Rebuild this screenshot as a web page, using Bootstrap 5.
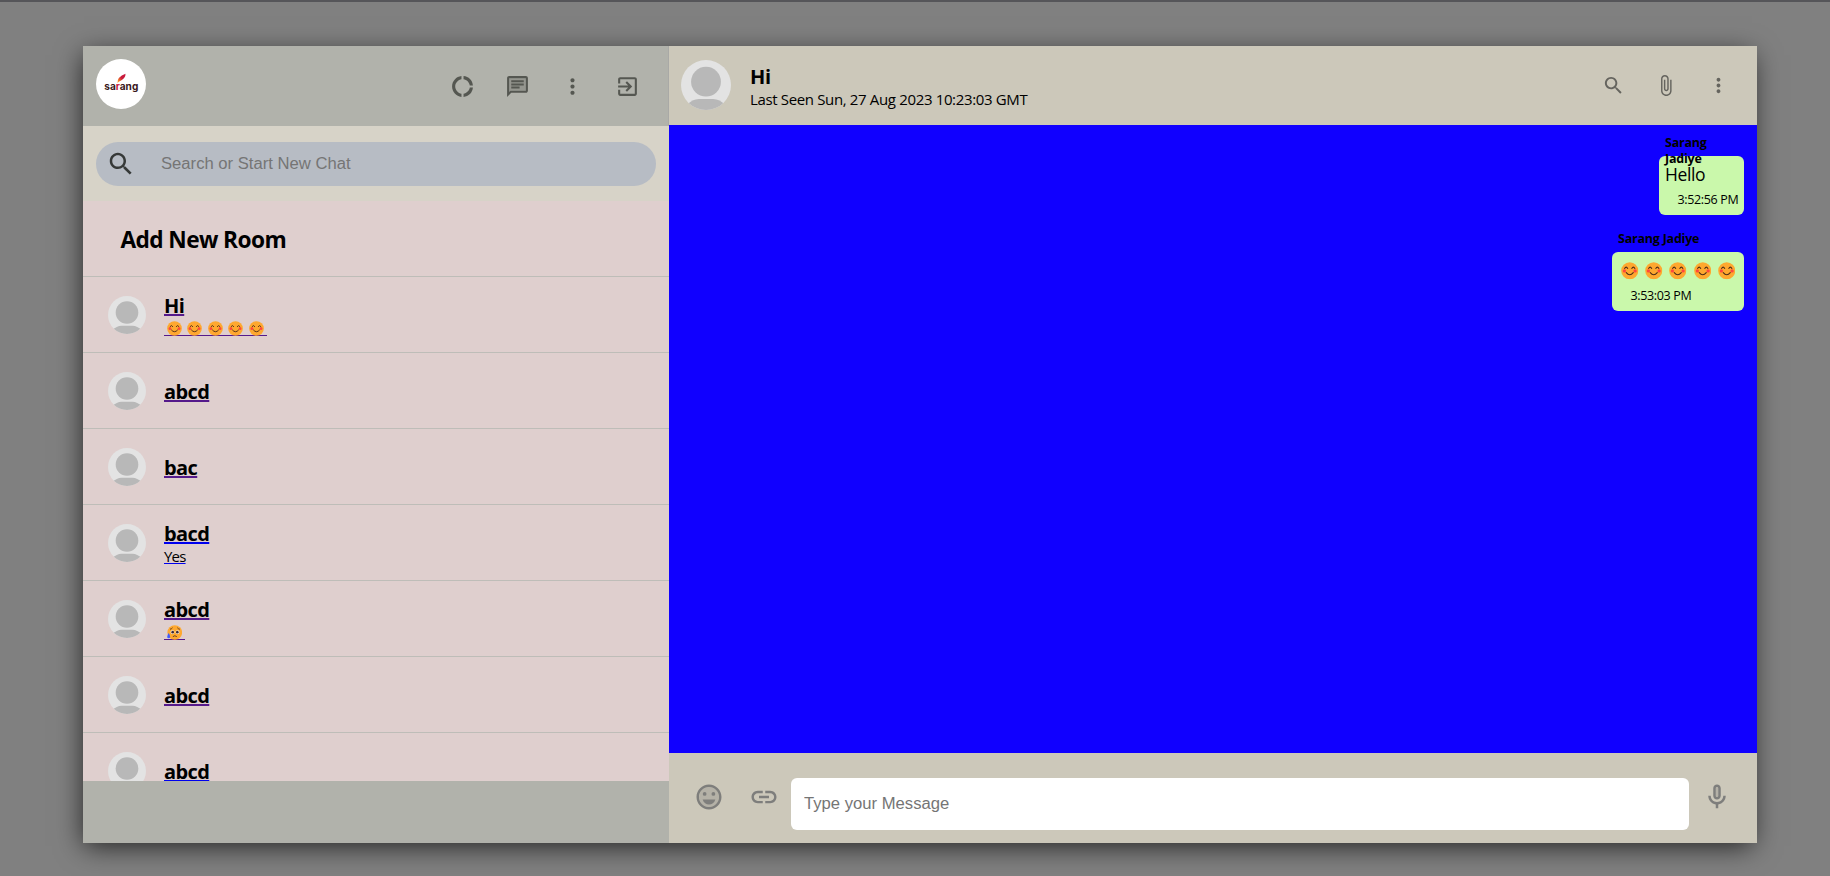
<!DOCTYPE html>
<html lang="en">
<head>
<meta charset="utf-8">
<title>Chat</title>
<link href="https://cdn.jsdelivr.net/npm/bootstrap@5.3.0/dist/css/bootstrap.min.css" rel="stylesheet">
<style>
body{background:#808080;border-top:2px solid #555559;height:100vh;overflow:hidden;font-family:"Open Sans","Noto Sans",sans-serif;color:#000}
.app{margin:44px 73px 0 83px;height:797px;box-shadow:-2px 6px 26px -3px rgba(0,0,0,.75)}
.side{width:586px}
.side-head{height:80px;flex:none;background:#b1b2ab;border-right:1px solid #a9a9a6;padding:0 28px 0 13px}
.ico{fill:#555751;display:block;flex:none}
.logo{width:50px;height:50px;margin-top:-4px}
.finder{height:75px;flex:none;background:#d7d3c8;padding:16px 13px 0}
.pill{height:44px;background:#b7bcc4;padding-left:10px}
.pill input,.composer input{font-family:"Liberation Sans",Arial,sans-serif;font-size:16.65px;outline:0}
.pill input{margin-left:25px}
input::placeholder{color:#757575;opacity:1}
.rooms{background:#dfcfce;overflow:hidden;min-height:0;flex:1 1 0}
.room{height:76px;border-bottom:1px solid #bebdb8;padding-left:25px;gap:18px;flex:none;text-decoration-color:#551a8b}
.room.fresh{text-decoration-color:#00e}
.new-room{font-size:22.7px;letter-spacing:-.6px;padding:3px 0 0 37.5px}
.room-name{font-size:20px;line-height:27px;letter-spacing:-.6px;padding-top:1px;margin-bottom:-1px;text-decoration:underline 2px;text-decoration-color:inherit;text-underline-offset:1px;text-decoration-skip-ink:none}
.room-last{font-size:15px;line-height:20px;letter-spacing:-.8px;text-decoration:underline 1px;text-decoration-color:inherit;text-underline-offset:1px;text-decoration-skip-ink:none}
.moods{height:20px;width:max-content;padding:0 3px 0 2.7px;gap:5.6px;background:linear-gradient(#551a8b,#551a8b) 0 17px/100% 1px no-repeat}
.side-foot{height:62px;flex:none;background:#b1b2ab}
.chat-head{height:79px;flex:none;background:#ccc8ba;padding:0 27px 0 12px}
.chat-head>svg{margin-top:-1px}
.chat-title{font-size:20px;line-height:27px;letter-spacing:-.4px;padding-top:1px;margin-bottom:-1px}
.chat-seen{font-size:15px;line-height:20px;letter-spacing:-.35px}
.tools{gap:29.5px}
.tools .ico{fill:#65645e}
.thread{background:#1000ff;padding:31px 13px 0;gap:37px}
.bubble{height:59px;background:#caf8ab;border-radius:6px;padding:6px 5px 0 6px}
.author{left:6px;right:6px;top:-21px;font-size:12.5px;line-height:16px;letter-spacing:-.22px}
.msg{font-size:17.5px;line-height:24px;letter-spacing:-.4px;height:26px}
.stamp{font-size:12.5px;line-height:22px;letter-spacing:-.35px;padding:1px 0 0 12.5px}
.b1{width:85px}.b2{width:132px}
.smiles{gap:6.7px;padding-left:3px}
.composer{height:90px;flex:none;background:#ccc8ba;padding:25px 25.5px 0 24.5px}
.composer .ico{fill:#7e7e7c;margin-top:4px}
.composer input{height:52px;border-radius:6px;padding:0 13px}
</style>
</head>
<body>
<svg width="0" height="0" class="position-absolute">
<defs>
<clipPath id="round"><circle cx="25" cy="25" r="25"/></clipPath>
<linearGradient id="quill" x1="1" y1="0" x2="0" y2="1"><stop offset=".45" stop-color="#c8193c"/><stop offset=".9" stop-color="#ff9a1f"/></linearGradient>
<symbol id="face" viewBox="0 0 50 50"><g clip-path="url(#round)"><rect width="50" height="50" fill="#e3e3e3"/><circle cx="25" cy="21.7" r="14.900" fill="#b8b8b8"/><path d="M6 45Q11 39 18 39h14q7 0 12 6v8H6z" fill="#b8b8b8"/></g></symbol>
<symbol id="smile" viewBox="0 0 18 18"><circle cx="9" cy="9" r="8.800" fill="#fea82f"/><circle cx="3.500" cy="9.200" r="1.700" fill="#ff473e"/><circle cx="14.500" cy="9.200" r="1.700" fill="#ff473e"/><path d="M3.700 6.600Q5.300 4 6.900 6.600M11.100 6.600Q12.700 4 14.300 6.600M5.400 10.900Q9 15.200 12.600 10.900" fill="none" stroke="#4a2a18" stroke-width="1.100" stroke-linecap="round"/></symbol>
<symbol id="worry" viewBox="0 0 18 18"><circle cx="9.300" cy="9" r="8.800" fill="#fea82f"/><circle cx="6.600" cy="8.500" r="2.300" fill="#fff"/><circle cx="12.600" cy="8.500" r="2.300" fill="#fff"/><circle cx="6.800" cy="8.600" r="1.600" fill="#402a32"/><circle cx="12.400" cy="8.600" r="1.600" fill="#402a32"/><path d="M3.600 5.100Q5.500 4.800 6.600 3.300M15.400 5.100Q13.500 4.800 12.400 3.300M7 14q2.400-2.200 4.800 0" fill="none" stroke="#59331d" stroke-width="1.100"/><path d="M2 9.500q2.200 3 1.800 5.200a1.900 1.900 0 0 1-3.600 0Q0 12.500 2 9.500z" fill="#3f5bff"/></symbol>
<symbol id="search" viewBox="0 0 24 24"><path d="M15.500 14h-.79l-.28-.27C15.410 12.590 16 11.110 16 9.500 16 5.910 13.090 3 9.500 3S3 5.910 3 9.500 5.910 16 9.500 16c1.610 0 3.090-.59 4.230-1.570l.27.28v.79l5 4.990L20.490 19l-4.990-5zm-6 0C7.010 14 5 11.990 5 9.500S7.010 5 9.500 5 14 7.010 14 9.500 11.990 14 9.500 14z"/></symbol>
<symbol id="more" viewBox="0 0 24 24"><path d="M12 8c1.100 0 2-.9 2-2s-.9-2-2-2-2 .9-2 2 .9 2 2 2zm0 2c-1.100 0-2 .9-2 2s.9 2 2 2 2-.9 2-2-.9-2-2-2zm0 6c-1.100 0-2 .9-2 2s.9 2 2 2 2-.9 2-2-.9-2-2-2z"/></symbol>
</defs>
</svg>
<main class="app d-flex">
<aside class="side d-flex flex-column flex-shrink-0">
<header class="side-head d-flex align-items-center justify-content-between">
<svg class="logo" viewBox="0 0 50 50"><circle cx="25" cy="25" r="25" fill="#fff"/><path d="M21.500 24Q21 18 29.500 14.800 30 19.500 22.800 22.800z" fill="url(#quill)"/><text x="8.300" y="31" font-family="Inter,sans-serif" font-weight="700" font-size="10" textLength="34" lengthAdjust="spacingAndGlyphs" fill="#3a1820">sa<tspan fill="#c8193c">r</tspan>ang</text></svg>
<div class="d-flex" style="gap:30px">
<svg class="ico" width="25" height="25" viewBox="0 0 24 24"><path d="M11 5.080V2c-5 .5-9 4.810-9 10s4 9.500 9 10v-3.080c-3-.48-6-3.400-6-6.920s3-6.440 6-6.920zM18.970 11H22c-.47-5-4-8.530-9-9v3.080C16 5.510 18.540 8 18.970 11zM13 18.920V22c5-.47 8.530-4 9-9h-3.030c-.43 3-2.970 5.490-5.970 5.920z"/></svg>
<svg class="ico" width="25" height="25" viewBox="0 0 24 24"><path opacity=".3" d="M4 17.170L5.170 16H20V4H4z"/><path d="M20 2H4c-1.100 0-2 .9-2 2v18l4-4h14c1.100 0 2-.9 2-2V4c0-1.100-.9-2-2-2zm0 14H5.170L4 17.170V4h16v12zM6 12h8v2H6zm0-3h12v2H6zm0-3h12v2H6z"/></svg>
<svg class="ico" width="25" height="25"><use href="#more"/></svg>
<svg class="ico" width="25" height="25" viewBox="0 0 24 24"><path d="M10.090 15.590L11.500 17l5-5-5-5-1.410 1.410L12.670 11H3v2h9.670l-2.580 2.590zM19 3H5c-1.110 0-2 .9-2 2v4h2V5h14v14H5v-4H3v4c0 1.100.89 2 2 2h14c1.100 0 2-.9 2-2V5c0-1.100-.9-2-2-2z"/></svg>
</div>
</header>
<div class="finder"><div class="pill rounded-pill d-flex align-items-center"><svg class="ico" style="fill:#363938" width="30" height="30"><use href="#search"/></svg><input class="border-0 bg-transparent flex-grow-1 p-0" placeholder="Search or Start New Chat"></div></div>
<nav class="rooms d-flex flex-column">
<div class="room new-room d-flex align-items-center fw-bold">Add New Room</div>
<div class="room d-flex align-items-center"><svg width="38" height="38"><use href="#face"/></svg><div style="text-decoration-color:inherit"><div class="d-flex" style="text-decoration-color:inherit"><div class="room-name fw-bold">Hi</div></div><div class="moods d-flex align-items-center"><svg width="15" height="15"><use href="#smile"/></svg><svg width="15" height="15"><use href="#smile"/></svg><svg width="15" height="15"><use href="#smile"/></svg><svg width="15" height="15"><use href="#smile"/></svg><svg width="15" height="15"><use href="#smile"/></svg></div></div></div>
<div class="room d-flex align-items-center"><svg width="38" height="38"><use href="#face"/></svg><div class="room-name fw-bold">abcd</div></div>
<div class="room d-flex align-items-center"><svg width="38" height="38"><use href="#face"/></svg><div class="room-name fw-bold">bac</div></div>
<div class="room fresh d-flex align-items-center"><svg width="38" height="38"><use href="#face"/></svg><div style="text-decoration-color:inherit"><div class="room-name fw-bold">bacd</div><div class="room-last">Yes</div></div></div>
<div class="room d-flex align-items-center"><svg width="38" height="38"><use href="#face"/></svg><div style="text-decoration-color:inherit"><div class="room-name fw-bold">abcd</div><div class="moods d-flex align-items-center"><svg width="15" height="15"><use href="#worry"/></svg></div></div></div>
<div class="room d-flex align-items-center"><svg width="38" height="38"><use href="#face"/></svg><div class="room-name fw-bold">abcd</div></div>
<div class="room fresh d-flex align-items-center"><svg width="38" height="38"><use href="#face"/></svg><div class="room-name fw-bold">abcd</div></div>
</nav>
<footer class="side-foot"></footer>
</aside>
<section class="d-flex flex-column flex-grow-1">
<header class="chat-head d-flex align-items-center">
<svg width="50" height="50"><use href="#face"/></svg>
<div class="flex-grow-1" style="padding-left:19px"><div class="chat-title fw-bold">Hi</div><div class="chat-seen">Last Seen Sun, 27 Aug 2023 10:23:03 GMT</div></div>
<div class="tools d-flex">
<svg class="ico" width="23" height="23"><use href="#search"/></svg>
<svg class="ico" width="23" height="23" viewBox="0.700 0 24 24"><path d="M16.500 6v11.500c0 2.210-1.790 4-4 4s-4-1.790-4-4V5c0-1.380 1.120-2.500 2.500-2.500s2.500 1.120 2.500 2.500v10.500c0 .55-.45 1-1 1s-1-.45-1-1V6H10v9.500c0 1.380 1.120 2.500 2.500 2.500s2.500-1.120 2.500-2.500V5c0-2.210-1.790-4-4-4S7 2.790 7 5v12.500c0 3.040 2.460 5.500 5.500 5.500s5.500-2.460 5.500-5.500V6h-1.500z"/></svg>
<svg class="ico" width="23" height="23"><use href="#more"/></svg>
</div>
</header>
<div class="thread flex-grow-1 d-flex flex-column align-items-end">
<div class="bubble b1 position-relative"><div class="author position-absolute fw-bold">Sarang Jadiye</div><div class="msg">Hello</div><div class="stamp text-nowrap">3:52:56 PM</div></div>
<div class="bubble b2 position-relative"><div class="author position-absolute fw-bold">Sarang Jadiye</div><div class="msg smiles d-flex align-items-center"><svg width="17.500" height="17.500"><use href="#smile"/></svg><svg width="17.500" height="17.500"><use href="#smile"/></svg><svg width="17.500" height="17.500"><use href="#smile"/></svg><svg width="17.500" height="17.500"><use href="#smile"/></svg><svg width="17.500" height="17.500"><use href="#smile"/></svg></div><div class="stamp text-nowrap">3:53:03 PM</div></div>
</div>
<footer class="composer d-flex align-items-start">
<svg class="ico" width="30" height="30" viewBox="0 0 24 24"><path opacity=".3" d="M12 4a8 8 0 1 0 0 16 8 8 0 0 0 0-16z"/><path d="M11.990 2C6.470 2 2 6.480 2 12s4.470 10 9.990 10C17.520 22 22 17.520 22 12S17.520 2 11.990 2zM12 20c-4.420 0-8-3.580-8-8s3.580-8 8-8 8 3.580 8 8-3.580 8-8 8z"/><circle cx="8.500" cy="9.500" r="1.500"/><circle cx="15.500" cy="9.500" r="1.500"/><path d="M12 18c2.300 0 4.300-1.450 5.100-4H6.900c.8 2.550 2.800 4 5.100 4z"/></svg>
<svg class="ico" style="margin-left:25px" width="30" height="30" viewBox="0 0 24 24"><path d="M3.900 12c0-1.710 1.390-3.100 3.100-3.100h4V7H7c-2.760 0-5 2.240-5 5s2.240 5 5 5h4v-1.900H7c-1.710 0-3.100-1.390-3.100-3.100zM8 13h8v-2H8v2zm9-6h-4v1.900h4c1.710 0 3.100 1.390 3.100 3.100s-1.390 3.100-3.100 3.100h-4V17h4c2.760 0 5-2.240 5-5s-2.240-5-5-5z"/></svg>
<input class="border-0 flex-grow-1 bg-white" style="margin-left:12.5px" placeholder="Type your Message">
<svg class="ico" style="margin-left:12.5px" width="30" height="30" viewBox="0 0 24 24"><path opacity=".3" d="M12 4a1 1 0 0 0-1 1v6a1 1 0 0 0 2 0V5a1 1 0 0 0-1-1z"/><path d="M12 14c1.660 0 3-1.340 3-3V5c0-1.660-1.340-3-3-3S9 3.340 9 5v6c0 1.660 1.340 3 3 3zm-1-9c0-.55.45-1 1-1s1 .45 1 1v6c0 .55-.45 1-1 1s-1-.45-1-1V5zm6 6c0 2.760-2.240 5-5 5s-5-2.240-5-5H5c0 3.530 2.610 6.430 6 6.920V21h2v-3.080c3.390-.49 6-3.390 6-6.920h-2z"/></svg>
</footer>
</section>
</main>
<script src="https://cdn.jsdelivr.net/npm/bootstrap@5.3.0/dist/js/bootstrap.bundle.min.js"></script>
</body>
</html>
